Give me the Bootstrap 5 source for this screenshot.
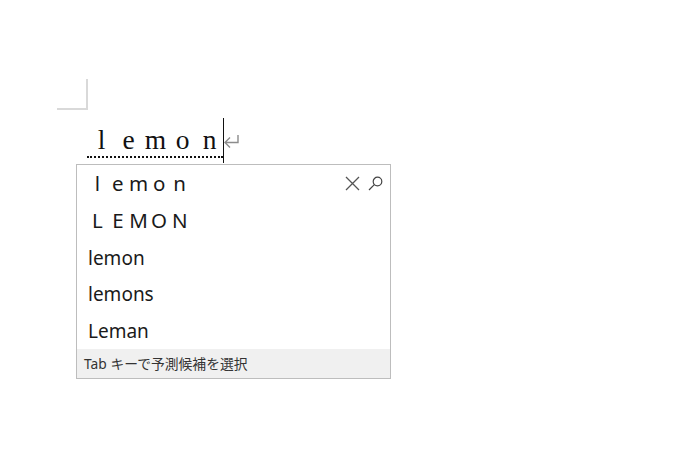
<!DOCTYPE html>
<html lang="ja">
<head>
<meta charset="utf-8">
<title>lemon</title>
<link href="https://cdn.jsdelivr.net/npm/bootstrap@5.3.0/dist/css/bootstrap.min.css" rel="stylesheet">
<style>
html,body{height:100%;background:#fff;overflow:hidden}
.doc-page{padding:79px 0 0 57px;font-family:"Noto Sans","Noto Sans CJK JP",sans-serif;color:#222}
.crop-mark{width:31px;height:31px;border-right:2px solid #d9d9d9;border-bottom:2px solid #d9d9d9}
.typed-row{margin:8px 0 0 30px;height:46px;width:155px}
.typed-word{font-family:"Liberation Serif",serif;font-size:27.5px;color:#111;width:136px;height:40px;padding:6px 0 0 1px;line-height:32px;border-bottom:2px dotted #111}
.typed-cell{width:27px;text-align:center;flex:none}
.caret-bar{width:1px;height:45px;background:#111;flex:none}
.return-mark{flex:none;margin:15px 0 0 -1px}
.suggest-box{width:315px;height:215px;margin:0 0 0 19px;border:1px solid #bdbdbd;background:#fff}
.suggest-row{height:36.8px;padding-left:11px;font-size:19px;line-height:38.8px;color:#1a1a1a;white-space:nowrap}
.suggest-wide{padding-left:10px;font-size:20.5px;line-height:36.8px}
.wide-cell{width:20.6px;text-align:center;flex:none}
.suggest-tools{top:11px;right:7px}
.suggest-foot{background:#f0f0f0;height:29px;padding-left:7px;font-size:13.8px;line-height:29px;color:#333;white-space:nowrap}
</style>
</head>
<body>
<div class="doc-page">
  <div class="crop-mark"></div>
  <div class="typed-row d-flex align-items-start">
    <div class="typed-word d-flex"><span class="typed-cell">l</span><span class="typed-cell">e</span><span class="typed-cell">m</span><span class="typed-cell">o</span><span class="typed-cell">n</span></div>
    <div class="caret-bar"></div>
    <svg class="return-mark" width="17" height="17" viewBox="0 0 17 17" fill="none" stroke="#8c8c8c" stroke-width="1.4"><path d="M15 2v7.5H2M7 4.5 2 9.5l5 5"/></svg>
  </div>
  <div class="suggest-box position-relative">
    <div class="suggest-tools position-absolute d-flex align-items-center gap-2">
      <svg width="15" height="15" viewBox="0 0 15 15" fill="none" stroke="#555" stroke-width="1.3"><path d="M1 1l13 13M14 1 1 14"/></svg>
      <svg width="15" height="15" viewBox="0 0 15 15" fill="none" stroke="#444" stroke-width="1.2"><circle cx="9.5" cy="5.5" r="4.3"/><path d="M6.3 8.7 1 14"/></svg>
    </div>
    <div class="suggest-row suggest-wide d-flex"><span class="wide-cell">l</span><span class="wide-cell">e</span><span class="wide-cell">m</span><span class="wide-cell">o</span><span class="wide-cell">n</span></div>
    <div class="suggest-row suggest-wide d-flex"><span class="wide-cell">L</span><span class="wide-cell">E</span><span class="wide-cell">M</span><span class="wide-cell">O</span><span class="wide-cell">N</span></div>
    <div class="suggest-row">lemon</div>
    <div class="suggest-row">lemons</div>
    <div class="suggest-row">Leman</div>
    <div class="suggest-foot">Tab キーで予測候補を選択</div>
  </div>
</div>
</body>
</html>
